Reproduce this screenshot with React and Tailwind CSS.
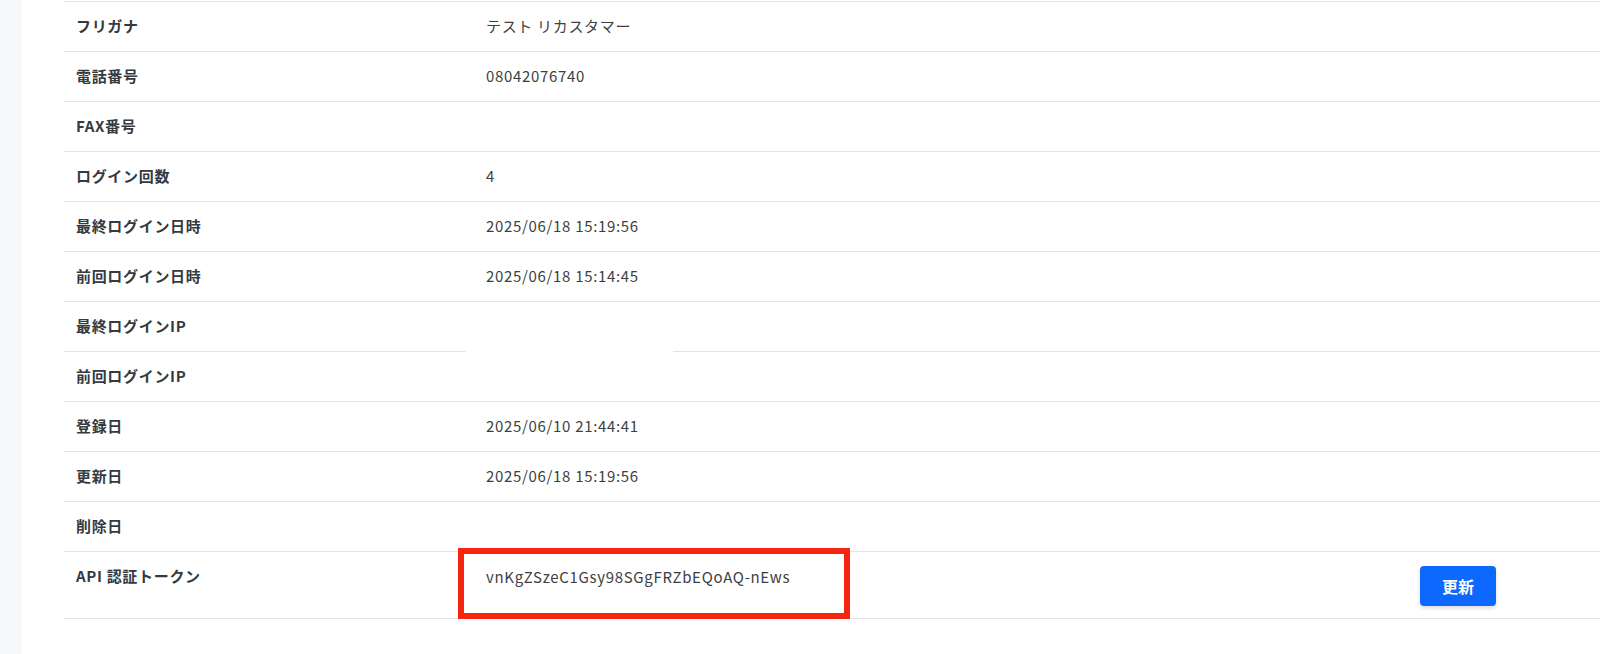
import React from "react";

const rows = [
  ["フリガナ", "テスト リカスタマー"],
  ["電話番号", "08042076740"],
  ["FAX番号", ""],
  ["ログイン回数", "4"],
  ["最終ログイン日時", "2025/06/18 15:19:56"],
  ["前回ログイン日時", "2025/06/18 15:14:45"],
  ["最終ログインIP", ""],
  ["前回ログインIP", ""],
  ["登録日", "2025/06/10 21:44:41"],
  ["更新日", "2025/06/18 15:19:56"],
  ["削除日", ""],
];

export default function App() {
  return (
    <div
      className="flex w-[1600px] h-[654px] bg-[#f7f8fa] overflow-hidden"
      style={{ fontFamily: '"Noto Sans CJK JP", "Noto Sans", sans-serif' }}
    >
      <div className="ml-[22px] flex-1 bg-white pl-[42px] pt-[1px]">
        <div className="relative">
          {rows.map(([label, value], i) => (
            <div
              key={i}
              className="flex h-[50px] border-t border-[#e4e4e4] text-[15px] tracking-[0.045em]"
            >
              <div className="w-[410px] pl-[12px] pt-[13px] font-bold text-[#343a40]">
                {label}
              </div>
              <div className="flex-1 pl-[12px] pt-[13px] text-[#3d3f42]">
                {value}
              </div>
            </div>
          ))}
          <div className="relative flex h-[68px] border-y border-[#e4e4e4] text-[15px] tracking-[0.045em]">
            <div className="w-[410px] pl-[12px] pt-[13px] font-bold text-[#343a40]">
              API 認証トークン
            </div>
            <div className="flex-1 pl-[12px] pt-[14px] text-[#3d3f42]">
              vnKgZSzeC1Gsy98SGgFRZbEQoAQ-nEws
            </div>
            <div className="pr-[104px] pt-[14px]">
              <button className="w-[76px] h-[40px] rounded-[4px] bg-[#0d68fd] text-white text-[16px] font-bold tracking-normal shadow-[0_2px_4px_rgba(0,0,0,0.15)]">
                更新
              </button>
            </div>
            <div className="absolute left-[394px] top-[-4px] w-[392px] h-[71px] border-[6px] border-[#f4260f]" />
          </div>
          <div className="absolute left-[402px] top-[310px] w-[207px] h-[80px] bg-white" />
        </div>
      </div>
    </div>
  );
}
